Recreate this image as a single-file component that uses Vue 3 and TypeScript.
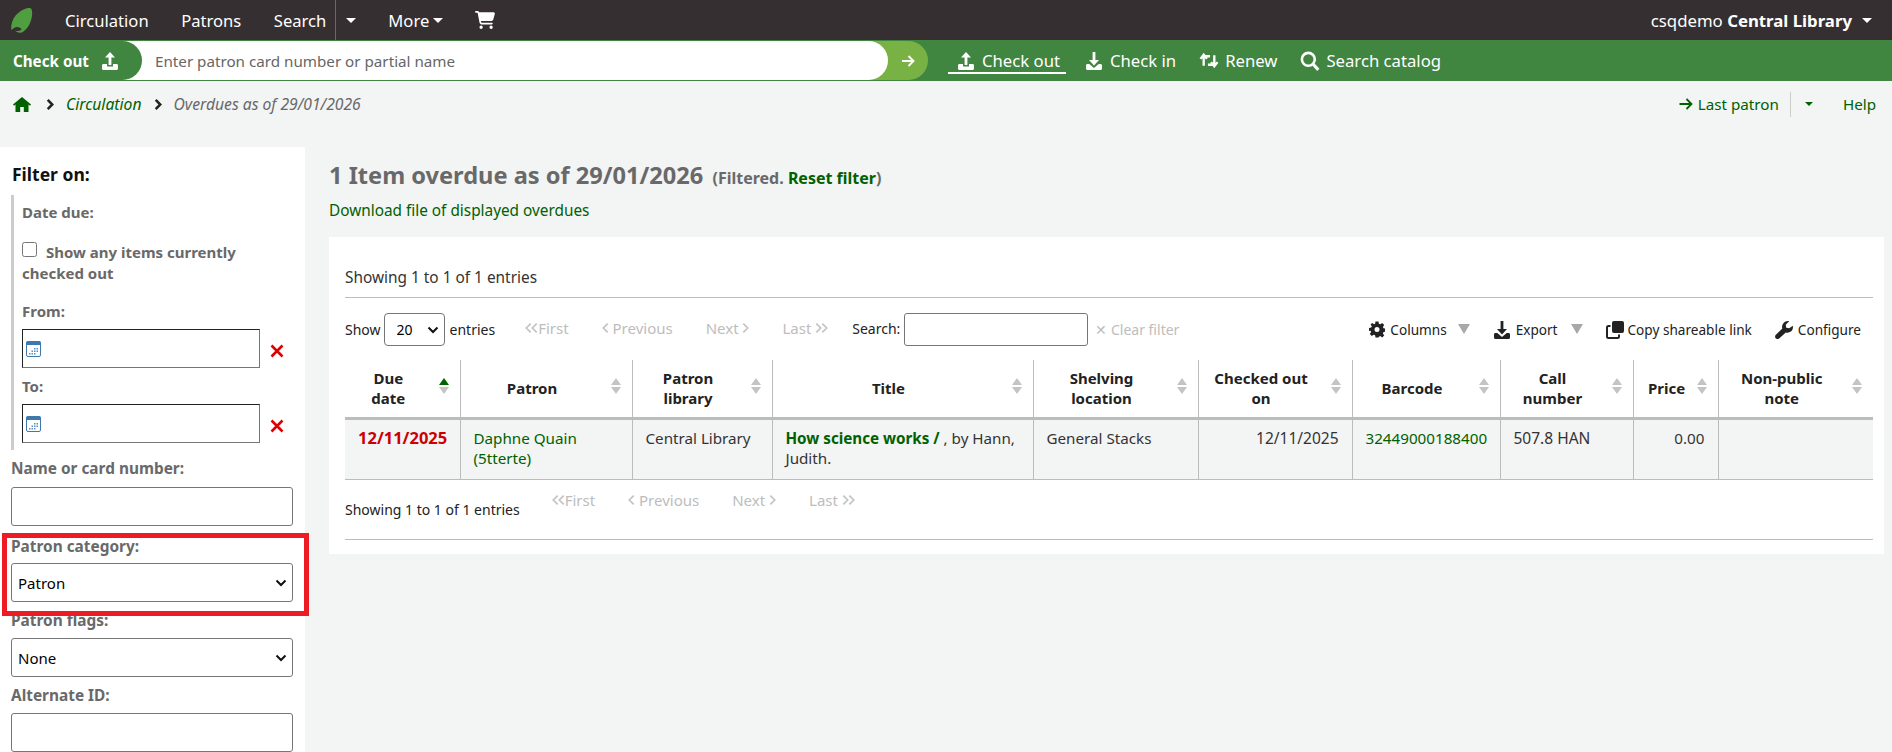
<script setup lang="ts">
const cols = [
  { label: ['Due', 'date'], active: true },
  { label: ['Patron'] },
  { label: ['Patron', 'library'] },
  { label: ['Title'] },
  { label: ['Shelving', 'location'] },
  { label: ['Checked out', 'on'] },
  { label: ['Barcode'] },
  { label: ['Call', 'number'] },
  { label: ['Price'], tight: true },
  { label: ['Non-public', 'note'] },
]
const widths = [115, 172, 140, 261, 165, 154, 148, 133, 85, 155]
</script>

<template>
  <div class="page">
    <header class="topnav">
      <svg class="logo" viewBox="0 0 22 25" width="22" height="25">
        <path fill="#4f9e3f" d="M19 0C21 0 21.500 4 21 8 20 15 16 22 11 24.500 8 25.500 5 24 4 22.500 6 23.500 9 23 10.500 21.500 10 19.500 6 18 3 20 2 20.500 1 22 .5 22-.5 18 1 12 5 7 9 3 15-.5 19 0z"/>
      </svg>
      <a class="tl first">Circulation</a>
      <a class="tl">Patrons</a>
      <a class="tl">Search</a>
      <span class="tdiv"></span>
      <span class="caret w c1"></span>
      <a class="tl more">More</a>
      <span class="caret w c2"></span>
      <svg class="cart" viewBox="0 0 576 512" width="20" height="18"><path fill="#fff" d="M0 24C0 10.700 10.700 0 24 0h45.500c22 0 41.500 12.800 50.600 32h411c26.300 0 45.500 25 38.600 50.400l-41 152.300c-8.500 31.400-37 53.300-69.500 53.300H170.700l5.400 28.500c2.200 11.300 12.100 19.500 23.600 19.500H488c13.300 0 24 10.700 24 24s-10.700 24-24 24H199.700c-34.600 0-64.300-24.600-70.700-58.500L77.400 54.500c-.7-3.800-4-6.500-7.900-6.500H24C10.700 48 0 37.300 0 24zM128 464a48 48 0 1 1 96 0 48 48 0 1 1-96 0zm336-48a48 48 0 1 1 0 96 48 48 0 1 1 0-96z"/></svg>
      <span class="user">csqdemo <b>Central Library</b></span>
      <span class="caret w c3"></span>
    </header>

    <div class="greenbar">
      <form class="search" @submit.prevent>
        <div class="tab">Check out
          <svg class="ic tabic" viewBox="0 0 16 18" width="16" height="18"><use href="#i-up"/></svg>
        </div>
        <input class="patron" placeholder="Enter patron card number or partial name" />
        <div class="go"><svg viewBox="0 0 14 14" width="14" height="14"><path d="M1 7h11M7.500 2l5 5-5 5" fill="none" stroke="#fff" stroke-width="1.900"/></svg></div>
      </form>
      <nav class="quick">
        <a class="q on"><svg viewBox="0 0 16 18" width="20" height="18"><use href="#i-up"/></svg>Check out</a>
        <a class="q"><svg viewBox="0 0 16 18" width="20" height="18"><use href="#i-down"/></svg>Check in</a>
        <a class="q"><svg viewBox="0 0 18 16" width="20" height="17"><path d="M4 13V4h6M1 6.500 4 2.500l3 4M14 3v9H8M11 9.500l3 4 3-4" fill="none" stroke="#fff" stroke-width="2.200"/></svg>Renew</a>
        <a class="q"><svg viewBox="0 0 18 18" width="20" height="20"><circle cx="7.500" cy="7.500" r="5.800" fill="none" stroke="#fff" stroke-width="2.300"/><path d="M11.500 11.500l5 5.500" stroke="#fff" stroke-width="2.800"/></svg>Search catalog</a>
      </nav>
    </div>

    <svg width="0" height="0" class="defs">
      <symbol id="i-up" viewBox="0 0 16 18"><path fill="#fff" d="M8 0l5 5.500h-3.600V13H6.600V5.500H3zM0 13.500c0-.8.600-1.500 1.500-1.500h3.500v2.500h6V12h3.500c.9 0 1.500.7 1.500 1.500v3c0 .8-.6 1.500-1.500 1.500h-13C.6 18 0 17.300 0 16.500z"/></symbol>
      <symbol id="i-down" viewBox="0 0 16 18"><path fill="#fff" d="M6.600 0h2.800v8H13l-5 5.500L3 8h3.600zM0 13.500c0-.8.600-1.500 1.500-1.500h1.800L8 16l4.700-4h1.800c.9 0 1.500.7 1.500 1.500v3c0 .8-.6 1.500-1.500 1.500h-13C.6 18 0 17.300 0 16.500z"/></symbol>
      <symbol id="i-cal" viewBox="0 0 15 16"><rect x=".5" y=".5" width="14" height="15" rx="1.500" fill="#fff" stroke="#3f78ad"/><rect x=".5" y=".5" width="14" height="3.500" fill="#3f78ad"/><path d="M3 12h1.500v1.500H3zM5.500 9.500H7V11H5.500zm0 2.500H7v1.500H5.500zM8 7h1.500v1.500H8zm0 2.500h1.500V11H8zM8 12h1.500v1.500H8zm2.500-5H12v1.500h-1.500zm0 2.500H12V11h-1.500z" fill="#5a8fc0"/></symbol>
      <symbol id="i-ch" viewBox="0 0 8 12"><path d="M1.500 1l5 5-5 5" fill="none" stroke="currentColor" stroke-width="2.800"/></symbol>
      <symbol id="i-cl" viewBox="0 0 8 12"><path d="M6.500 1l-5 5 5 5" fill="none" stroke="currentColor" stroke-width="2"/></symbol>
      <symbol id="i-cr" viewBox="0 0 8 12"><path d="M1.500 1l5 5-5 5" fill="none" stroke="currentColor" stroke-width="2"/></symbol>
    </svg>

    <div class="crumbrow">
      <svg class="home" viewBox="0 0 18 15" width="18" height="15"><path fill="#006100" d="M9 0l9 7.500-1 1.200-1.500-1.200V15h-4.700v-5H7.200v5H2.500V7.500L1 8.700 0 7.500z"/></svg>
      <svg class="sep s1" width="8" height="11"><use href="#i-ch"/></svg>
      <a class="crumb">Circulation</a>
      <svg class="sep" width="8" height="11"><use href="#i-ch"/></svg>
      <span class="crumb cur">Overdues as of 29/01/2026</span>
      <span class="spring"></span>
      <a class="last">
        <svg viewBox="0 0 14 12" width="15" height="12"><path d="M0 6h12M7 1l5 5-5 5" fill="none" stroke="#006100" stroke-width="1.800"/></svg>
        Last patron</a>
      <span class="vr"></span>
      <span class="caret g"></span>
      <a class="help">Help</a>
    </div>

    <div class="body">
      <aside class="side">
        <h4>Filter on:</h4>
        <div class="group">
          <div class="lab due">Date due:</div>
          <label class="lab chk"><input type="checkbox" /> Show any items currently checked out</label>
          <div class="lab from">From:</div>
          <div class="daterow">
            <div class="date"><svg viewBox="0 0 15 16" width="15" height="16"><use href="#i-cal"/></svg></div>
            <svg class="x" viewBox="0 0 14 14" width="14" height="14"><path d="M1.500 1.500l11 11M12.500 1.500l-11 11" stroke="#d00" stroke-width="2.600"/></svg>
          </div>
          <div class="lab to">To:</div>
          <div class="daterow">
            <div class="date"><svg viewBox="0 0 15 16" width="15" height="16"><use href="#i-cal"/></svg></div>
            <svg class="x" viewBox="0 0 14 14" width="14" height="14"><path d="M1.500 1.500l11 11M12.500 1.500l-11 11" stroke="#d00" stroke-width="2.600"/></svg>
          </div>
        </div>
        <div class="lab low f1">Name or card number:</div>
        <input class="field" />
        <div class="lab low f2">Patron category:</div>
        <select class="field sel"><option>Patron</option></select>
        <div class="lab low f3">Patron flags:</div>
        <select class="field sel"><option>None</option></select>
        <div class="lab low f4">Alternate ID:</div>
        <input class="field" />
        <div class="redbox"></div>
      </aside>

      <main class="main">
        <h1>1 Item overdue as of 29/01/2026 <small>(Filtered. <a>Reset filter</a>)</small></h1>
        <a class="dl">Download file of displayed overdues</a>
        <section class="panel">
          <div class="info top">Showing 1 to 1 of 1 entries</div>
          <div class="toolbar">
            <span>Show</span>
            <select class="len"><option>20</option></select>
            <span>entries</span>
            <div class="pager">
              <span class="pg"><svg width="7" height="12"><use href="#i-cl"/></svg><svg class="dbl" width="7" height="12"><use href="#i-cl"/></svg>First</span>
              <span class="pg"><svg width="7" height="12"><use href="#i-cl"/></svg>&nbsp;Previous</span>
              <span class="pg">Next&nbsp;<svg width="7" height="12"><use href="#i-cr"/></svg></span>
              <span class="pg">Last&nbsp;<svg width="7" height="12"><use href="#i-cr"/></svg><svg class="dbl" width="7" height="12"><use href="#i-cr"/></svg></span>
            </div>
            <span class="slab">Search:</span>
            <input class="sinput" />
            <span class="clear">✕ Clear filter</span>
            <span class="spring"></span>
            <span class="tool t1">
              <svg viewBox="0 0 16 16" width="16" height="17"><path fill="#222" fill-rule="evenodd" d="M6.500 0h3l.4 2.200 1.400.6L13.200 1.500l2 2-1.300 1.900.6 1.400 2.200.4v3l-2.200.4-.6 1.400 1.300 1.900-2 2-1.900-1.300-1.400.6L9.500 16h-3l-.4-2.200-1.400-.6-1.900 1.300-2-2 1.300-1.900-.6-1.400L0 9.500v-3l2.200-.4.6-1.400L1.500 2.800l2-1.300 1.400 1.300 1.200-.6zM8 5.500a2.500 2.500 0 1 0 0 5 2.500 2.500 0 0 0 0-5z"/></svg>
              Columns</span>
            <span class="tri"></span>
            <span class="tool t2">
              <svg viewBox="0 0 16 18" width="18" height="18"><path fill="#222" d="M6.600 0h2.800v8H13l-5 5.500L3 8h3.600zM0 13.500c0-.8.600-1.500 1.500-1.500h1.800L8 16l4.700-4h1.800c.9 0 1.500.7 1.500 1.500v3c0 .8-.6 1.500-1.500 1.500h-13C.6 18 0 17.300 0 16.500z"/></svg>
              Export</span>
            <span class="tri"></span>
            <span class="tool t3">
              <svg viewBox="0 0 18 18" width="18" height="18"><rect x="6" y="0" width="12" height="12" rx="2" fill="#222"/><path d="M4.500 5H2.500A1.500 1.500 0 0 0 1 6.500v9A1.500 1.500 0 0 0 2.500 17h9a1.500 1.500 0 0 0 1.500-1.500v-2" fill="none" stroke="#222" stroke-width="2"/></svg>
              Copy shareable link</span>
            <span class="tool t4">
              <svg viewBox="0 0 16 16" width="18" height="18"><path fill="#222" d="M15.800 4.200c.5 2-.2 4-1.700 5.200-1.300 1-3 1.300-4.500.8L3.700 15.500c-.9.800-2.300.7-3.100-.2s-.7-2.200.2-3l5.700-5.600C6 5.100 6.400 3.300 7.500 2 8.700.5 10.700-.2 12.600.2L9.500 3.300l.5 2.700 2.700.5z"/></svg>
              Configure</span>
          </div>
          <table>
            <colgroup><col v-for="(w, i) in widths" :key="i" :style="{ width: w + 'px' }" /></colgroup>
            <thead>
              <tr>
                <th v-for="c in cols" :key="c.label[0]" :class="{ tight: c.tight }">
                  <template v-for="(l, i) in c.label" :key="l"><br v-if="i" />{{ l }}</template>
                  <span class="sort" :class="{ active: c.active }"><i class="up"></i><i class="down"></i></span>
                </th>
              </tr>
            </thead>
            <tbody>
              <tr>
                <td class="red">12/11/2025</td>
                <td><a>Daphne Quain<br />(5tterte)</a></td>
                <td>Central Library</td>
                <td><a class="bold">How science works / </a><span>, by Hann,</span><br /><span>Judith.</span></td>
                <td>General Stacks</td>
                <td class="num d16">12/11/2025</td>
                <td><a>32449000188400</a></td>
                <td class="d16">507.8 HAN</td>
                <td class="num">0.00</td>
                <td></td>
              </tr>
            </tbody>
          </table>
          <div class="foot">
            <div class="info bottom">Showing 1 to 1 of 1 entries</div>
            <div class="pager lower">
              <span class="pg"><svg width="7" height="12"><use href="#i-cl"/></svg><svg class="dbl" width="7" height="12"><use href="#i-cl"/></svg>First</span>
              <span class="pg"><svg width="7" height="12"><use href="#i-cl"/></svg>&nbsp;Previous</span>
              <span class="pg">Next&nbsp;<svg width="7" height="12"><use href="#i-cr"/></svg></span>
              <span class="pg">Last&nbsp;<svg width="7" height="12"><use href="#i-cr"/></svg><svg class="dbl" width="7" height="12"><use href="#i-cr"/></svg></span>
            </div>
          </div>
        </section>
      </main>
    </div>
  </div>
</template>

<style>
html, body { margin: 0; height: 100%; overflow: hidden; background: #f3f4f4; }
</style>

<style scoped>
.page { font-family: "Noto Sans", "Open Sans", sans-serif; font-size: 15.200px; color: #333; height: 752px; overflow: hidden; background: #f3f4f4; }
.defs { position: absolute; }
a { color: #006100; }

.topnav { height: 40px; background: #362f31; display: flex; align-items: center; color: #fff; }
.logo { margin-left: 11px; flex: none; }
.tl { color: #fff; font-size: 16.600px; margin-left: 32.500px; }
.tl.first { margin-left: 32px; }
.tdiv { width: 1px; height: 40px; background: #408540; margin-left: 9px; }
.caret { width: 0; height: 0; border-left: 5px solid transparent; border-right: 5px solid transparent; border-top: 5px solid #fff; }
.caret.c1 { margin-left: 10px; }
.tl.more { margin-left: 32px; }
.caret.c2 { margin-left: 4px; }
.cart { margin-left: 32px; }
.user { margin-left: auto; font-size: 16.800px; }
.user b { font-weight: 700; }
.caret.c3 { margin: 0 20px 0 10px; }

.greenbar { height: 41px; background: #408540; display: flex; align-items: center; }
.search { display: flex; width: 928px; height: 39px; }
.tab { position: relative; z-index: 1; width: 142px; box-sizing: border-box; padding-left: 13px; background: #408540; border-radius: 0 20px 20px 0; color: #fff; font-weight: 700; display: flex; align-items: center; flex: none; }
.tabic { margin-left: 13px; }
.patron { flex: 1; min-width: 0; margin-left: -20px; padding: 0 0 0 33px; border: 0; border-radius: 0 20px 20px 0; background: #fff; font: 15.200px "Noto Sans", sans-serif; position: relative; outline: none; color: #555; }
.patron::placeholder { color: #666; opacity: 1; }
.go { width: 60px; margin-left: -20px; padding-left: 20px; box-sizing: border-box; background: #78b244; border-radius: 0 20px 20px 0; display: flex; align-items: center; justify-content: center; flex: none; }
.quick { display: flex; margin-left: 20px; align-self: stretch; }
.q { color: #fff; font-size: 16.700px; display: flex; align-items: center; gap: 6px; margin-right: 23px; }
.q.on { position: relative; margin-left: 8px; margin-right: 24px; }
.q.on::after { content: ""; position: absolute; left: -8px; right: -6px; top: 32px; height: 2px; background: #fff; }

.crumbrow { height: 66px; box-sizing: border-box; padding-bottom: 20px; display: flex; align-items: center; }
.home { margin-left: 13px; flex: none; }
.sep { color: #222; flex: none; margin: 0 12px; }
.sep.s1 { margin: 0 12px 0 15px; }
.crumb { font-style: italic; color: #006100; font-size: 15.700px; }
.crumb.cur { color: #696969; }
.spring { flex: 1; }
.last { display: flex; align-items: center; gap: 4px; color: #006100; }
.vr { width: 1px; height: 25px; background: #ccc; margin: 0 14px 0 11px; }
.caret.g { border-top-color: #006100; border-left-width: 4px; border-right-width: 4px; border-top-width: 4px; }
.help { color: #006100; margin: 0 16px 0 30px; }

.body { display: flex; align-items: flex-start; }
.side { position: relative; width: 305px; height: 620px; background: #fff; box-sizing: border-box; padding: 0 12px 0 11px; flex: none; }
.side h4 { margin: 0; padding-top: 16px; padding-left: 1px; font-size: 17.500px; line-height: 22px; font-weight: 700; color: #111; }
.group { margin-top: 10px; border-left: 3px solid #ccc; padding-left: 8px; height: 255px; box-sizing: border-box; }
.lab { font-weight: 700; font-size: 15px; color: #696969; line-height: 20px; }
.lab.low { font-size: 15.400px; }
.due { padding-top: 7px; }
.chk { display: block; margin-top: 20px; line-height: 21px; }
.chk input { margin: 0 5px 0 0; width: 15px; height: 15px; vertical-align: 1px; }
.from { margin-top: 17px; }
.to { margin-top: 8px; }
.daterow { display: flex; align-items: center; margin-top: 8px; }
.date { width: 238px; height: 39px; box-sizing: border-box; border: 1px solid #767676; border-top-color: #222; border-left-color: #222; padding: 11px 0 0 3px; }
.date svg { display: block; }
.x { margin: 4px 0 0 10px; }
.field { display: block; width: 282px; height: 39px; box-sizing: border-box; border: 1px solid #767676; border-radius: 3px; background: #fff; font: 15px "Noto Sans", sans-serif; color: #000; }
.sel, .len { appearance: none; background-repeat: no-repeat; background-image: url("data:image/svg+xml,%3Csvg xmlns='http://www.w3.org/2000/svg' width='12' height='8'%3E%3Cpath d='M1.500 1.500 6 6l4.500-4.500' fill='none' stroke='%23111' stroke-width='2'/%3E%3C/svg%3E"); }
.sel { padding-left: 6px; background-position: right 5px center; }
.f1 { margin-top: 9px; margin-bottom: 8px; }
.f2 { margin-top: 11px; margin-bottom: 6px; }
.f3 { margin-top: 9px; margin-bottom: 7px; }
.f4 { margin-top: 9px; margin-bottom: 7px; }
.redbox { position: absolute; left: 2px; top: 386px; width: 307px; height: 83px; box-sizing: border-box; border: 5px solid #ed1c24; }

.main { flex: 1; min-width: 0; margin: 0 8px 0 24px; }
h1 { margin: 0; padding-top: 14px; font-size: 23.600px; line-height: 28px; font-weight: 700; color: #696969; }
h1 small { font-size: 16px; font-weight: 700; margin-left: 3px; }
.dl { display: block; margin-top: 7px; line-height: 22px; font-size: 15.350px; }
.panel { margin-top: 16px; background: #fff; padding: 0 11px 0 16px; height: 317px; box-sizing: border-box; }
.info.top { padding-top: 31px; line-height: 20px; height: 61px; box-sizing: border-box; border-bottom: 1px solid #bcbcbc; font-size: 15.400px; }
.toolbar { display: flex; align-items: center; height: 62px; padding: 1px 12px 0 0; box-sizing: border-box; color: #222; font-size: 14px; }
.len { width: 61px; height: 33px; margin: 0 5px 0 3px; border: 1px solid #767676; border-radius: 4px; background-color: #fff; background-position: right 5px center; font: 14px "Noto Sans", sans-serif; padding-left: 12px; color: #000; }
.pager { display: flex; color: #bdbdbd; font-size: 15px; margin-left: 30px; position: relative; top: -2px; }
.pg { display: flex; align-items: center; white-space: nowrap; margin-right: 33px; }
.pg:last-child { margin-right: 0; }
.pg svg { color: #c4c4c4; }
.pg .dbl { margin: 0 0 0 -1px; }
.slab { margin-left: 24px; position: relative; top: -1px; }
.sinput { width: 184px; height: 33px; box-sizing: border-box; border: 1px solid #767676; border-radius: 3px; margin-left: 4px; background: #fff; }
.clear { margin-left: 7px; color: #bdbdbd; }
.tool { display: flex; align-items: center; gap: 5px; font-size: 13.600px; color: #222; white-space: nowrap; }
.tri { width: 0; height: 0; border-left: 6px solid transparent; border-right: 6px solid transparent; border-top: 10px solid #a8a8a8; margin: 0 23px 2px 13px; }
.t1 + .tri { margin-left: 11px; }
.t3 { gap: 4px; }
.t4 { margin-left: 23px; gap: 5px; }

table { table-layout: fixed; border-collapse: collapse; width: 1528px; }
th { position: relative; padding: 0 38px 0 10px; height: 58px; text-align: center; font-weight: 700; font-size: 15px; line-height: 20px; color: #222; border-right: 1px solid #bcbcbc; border-bottom: 3px solid #bcbcbc; box-sizing: border-box; }
th.tight { padding: 0 28px 0 10px; }
th:last-child, td:last-child { border-right: 0; }
.sort { position: absolute; right: 11px; top: 50%; margin-top: -10px; display: flex; flex-direction: column; gap: 2px; }
.sort i { display: block; width: 0; height: 0; border-left: 5px solid transparent; border-right: 5px solid transparent; }
.up { border-bottom: 7px solid #c4c4c4; }
.down { border-top: 7px solid #c4c4c4; }
.sort.active .up { border-bottom-color: #006100; }
td { padding: 8px 13px 11px; vertical-align: top; line-height: 20px; height: 60px; box-sizing: border-box; background: #f3f4f4; border-right: 1px solid #bcbcbc; border-bottom: 1px solid #bcbcbc; color: #333; }
td.red { color: #c00; font-weight: 700; font-size: 16.500px; white-space: nowrap; }
td.d16 { font-size: 15.500px; }
td.num { text-align: right; }
.bold { font-weight: 700; }
.foot { display: flex; height: 59px; border-bottom: 1px solid #bcbcbc; align-items: flex-start; color: #222; }
.info.bottom { font-size: 14px; padding-top: 20px; line-height: 20px; }
.pager.lower { margin-left: 32px; top: 0; padding-top: 10px; line-height: 20px; }
</style>
